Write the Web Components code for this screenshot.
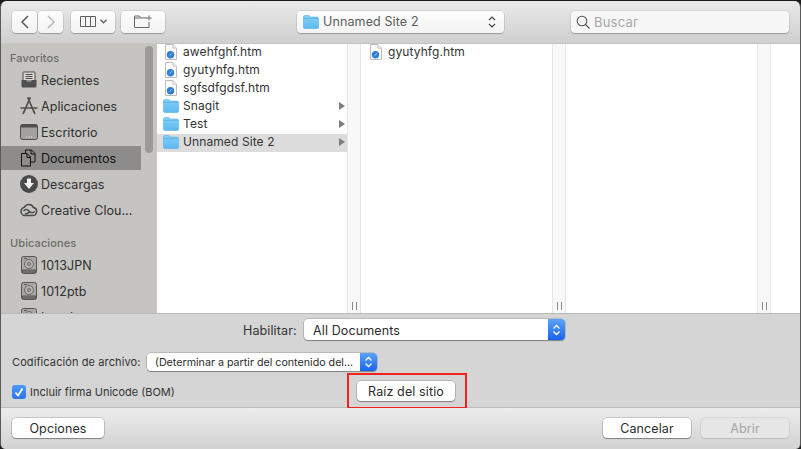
<!DOCTYPE html>
<html lang="es">
<head>
<meta charset="utf-8">
<title>Abrir</title>
<style>
  html, body { margin: 0; height: 449px; overflow: hidden; background: #1c1c1c; }
  body { font-family: Inter, "Liberation Sans", sans-serif; }
</style>
</head>
<body>
<open-dialog>
  <dialog-toolbar slot="toolbar"></dialog-toolbar>
  <place-sidebar slot="sidebar">
    <side-heading>Favoritos</side-heading>
    <side-item icon="recent">Recientes</side-item>
    <side-item icon="apps">Aplicaciones</side-item>
    <side-item icon="desktop">Escritorio</side-item>
    <side-item icon="docs" selected>Documentos</side-item>
    <side-item icon="down">Descargas</side-item>
    <side-item icon="cloud">Creative Clou...</side-item>
    <side-heading style="margin-top:13px">Ubicaciones</side-heading>
    <side-item icon="disk">1013JPN</side-item>
    <side-item icon="disk">1012ptb</side-item>
    <side-item icon="disk">Local</side-item>
  </place-sidebar>
  <file-browser slot="browser">
    <file-column style="width:204px">
      <file-row type="web">awehfghf.htm</file-row>
      <file-row type="web">gyutyhfg.htm</file-row>
      <file-row type="web">sgfsdfgdsf.htm</file-row>
      <file-row type="folder" arrow>Snagit</file-row>
      <file-row type="folder" arrow>Test</file-row>
      <file-row type="folder" arrow selected>Unnamed Site 2</file-row>
    </file-column>
    <file-column style="width:205px">
      <file-row type="web" indent>gyutyhfg.htm</file-row>
    </file-column>
    <file-column style="width:205px"></file-column>
    <file-column last></file-column>
  </file-browser>
  <open-options slot="options"></open-options>
  <dialog-footer slot="footer"></dialog-footer>
</open-dialog>

<script>
const FOLDER = `
  <svg width="16" height="14" viewBox="0 0 16 14">
    <defs><linearGradient id="fg" x1="0" y1="0" x2="0" y2="1"><stop offset="0" stop-color="#86d0f8"/><stop offset="1" stop-color="#5cb9f0"/></linearGradient></defs>
    <path d="M.5 2Q.5.5 2 .5h3.4q.8 0 1.3.7l.7.9h6.8q1.3 0 1.3 1.4v8.6q0 1.4-1.3 1.4H1.8Q.5 13.5.5 12.1z" fill="url(#fg)" stroke="#55addf" stroke-width=".6"/>
    <path d="M.6 3.4h14.8" stroke="#55addf" stroke-width=".7"/>
  </svg>`;

const WEB_FILE = `
  <svg width="12" height="16" viewBox="0 0 12 16">
    <path d="M.5.5h7.4l3.6 3.6v11.4H.5z" fill="#fcfcfc" stroke="#bdbdbd"/>
    <path d="M7.8.7v3.5h3.5" fill="#eee" stroke="#bdbdbd" stroke-width=".8"/>
    <circle cx="5.5" cy="10.7" r="3.7" fill="#2f7fd8"/>
    <path d="M3.4 12.8l2.6-3 1.6-1.2-1.2 1.7-3 2.5z" fill="#dfeeff"/>
  </svg>`;

const SIDE_ICONS = {
  recent: `<svg width="18" height="18" viewBox="0 0 18 18">
    <path d="M3 1.5Q3 1 3.5 1h11q.5 0 .5.5V10H3z" fill="#dbdad7" stroke="#4b4b4b"/>
    <path d="M5.5 3.5h7M5.5 5.5h7M5.5 7.5h7" stroke="#4b4b4b"/>
    <path d="M1.5 9H6l1 2h4l1-2h4.5v6q0 1.5-1.5 1.5H3Q1.500 16.500 1.500 15z" fill="#4f4f4f"/></svg>`,
  apps: `<svg width="18" height="18" viewBox="0 0 18 18" fill="none" stroke="#4d4d4d">
    <path d="M8 1l5.800 13.500M10 1L4.200 14.500" stroke-width="1.700" stroke-linecap="round"/>
    <path d="M1 11h16" stroke-width="1.500" stroke-linecap="round"/>
    <path d="M3.200 16.300l1-1.800M14.800 16.300l-1-1.800" stroke-width="1.600" stroke-linecap="round"/></svg>`,
  desktop: `<svg width="18" height="16" viewBox="0 0 18 16">
    <rect x=".5" y=".5" width="17" height="15" rx="1.800" fill="#a2a19f" stroke="#4f4f4f"/>
    <rect x="1" y="1" width="16" height="2.500" fill="#4f4f4f"/>
    <path d="M6 13h1M8.500 13h1M11 13h1" stroke="#e8e8e8" stroke-width="1.200"/></svg>`,
  docs: `<svg width="18" height="18" viewBox="0 0 18 18" fill="none" stroke="#111">
    <path d="M5.500 4V1h6l3.500 3.500V13h-4"/>
    <path d="M11 1v4h4"/>
    <path d="M1.500 4.500h5.500l3.500 3.500v9h-9z"/>
    <path d="M7 4.500V8.500h3.500"/></svg>`,
  down: `<svg width="18" height="18" viewBox="0 0 18 18">
    <circle cx="9" cy="9" r="9" fill="#4a4a4a"/>
    <path d="M7 3.500h4V8h3l-5 6-5-6h3z" fill="#f2f2f2"/></svg>`,
  cloud: `<svg width="18" height="14" viewBox="0 0 18 14" fill="none" stroke="#4a4a4a" stroke-width="1.500">
    <path d="M6 12.500h6.500a4 4 0 0 0 1-7.900A5 5 0 0 0 4.500 4.200 4.200 4.200 0 0 0 6 12.500z"/>
    <path d="M3.500 8c2-2.200 4-1.800 5.500 0s3.500 2.500 6 .5"/>
    <path d="M5 10.500c1.800 1 3.500-.5 4.500-1.700"/></svg>`,
  disk: `<svg width="16" height="18" viewBox="0 0 16 18">
    <rect x=".5" y=".5" width="15" height="17" rx="2" fill="#a8a7a5" stroke="#555"/>
    <path d="M3 2.500h3" stroke="#555"/>
    <circle cx="8" cy="8" r="4.500" fill="#b3b2b0" stroke="#6a6a6a"/>
    <circle cx="8" cy="8" r="1.500" fill="none" stroke="#666"/>
    <rect x="1" y="13.500" width="14" height="3.500" fill="#555"/>
    <path d="M3 14v3M5 14v3M7 14v3M9 14v3M11 14v3M13 14v3" stroke="#a8a7a5" stroke-width=".6"/></svg>`
};

// buttons share the same raised look, only the size changes
class PushButton extends HTMLElement {
  connectedCallback() {
    this.attachShadow({ mode: 'open' }).innerHTML = `
      <style>
        :host {
          display: inline-flex; align-items: center; justify-content: center;
          height: 20px; box-sizing: border-box; padding-top: 1px;
          background: #fff; border-radius: 4px; color: #2c2c2c;
          font-size: 12.5px; letter-spacing: .12px;
          box-shadow: 0 0 0 .5px rgba(0,0,0,.28), 0 1px 1px rgba(0,0,0,.3);
        }
        :host([disabled]) {
          background: #e6e6e6; color: #a5a5a5;
          box-shadow: 0 0 0 .5px rgba(0,0,0,.12), 0 1px 1px rgba(0,0,0,.08);
        }
      </style>
      <slot></slot>`;
  }
}

class ToolButton extends HTMLElement {
  connectedCallback() {
    this.attachShadow({ mode: 'open' }).innerHTML = `
      <style>
        :host {
          display: flex; align-items: center; justify-content: center;
          height: 22px; box-sizing: border-box; gap: 4px;
          background: linear-gradient(#fdfdfd, #f3f3f3); border-radius: 4px;
          box-shadow: 0 0 0 .5px rgba(0,0,0,.14), 0 1px 1px rgba(0,0,0,.22);
        }
      </style>
      <slot></slot>`;
  }
}

class DialogToolbar extends HTMLElement {
  connectedCallback() {
    this.attachShadow({ mode: 'open' }).innerHTML = `
      <style>
        :host {
          display: flex; align-items: center; box-sizing: border-box;
          height: 43px; padding: 0 11px 1px 11px;
          background: linear-gradient(#e9e9e9, #cfcfcf);
          border-bottom: 1px solid #c4c4c4;
        }
        .nav { display: flex; gap: 1px; margin-right: 8px; }
        .search {
          display: flex; align-items: center; gap: 4px; box-sizing: border-box;
          width: 218px; height: 22px; padding-left: 5px; margin-left: auto;
          background: #f7f7f7; border-radius: 4px;
          box-shadow: 0 0 0 .5px rgba(0,0,0,.12), 0 1px 1px rgba(0,0,0,.22);
          color: #a8a8a8; font-size: 13px; letter-spacing: .2px;
        }
        .path { font-size: 12.5px; color: #5c5c5c; letter-spacing: .12px; flex: 1; }
      </style>
      <div class="nav">
        <tool-button style="width:25px">
          <svg width="10" height="14" viewBox="0 0 10 14" fill="none" stroke="#5a5a5a" stroke-width="1.500"><path d="M8 1L2 7l6 6"/></svg>
        </tool-button>
        <tool-button style="width:25px">
          <svg width="10" height="14" viewBox="0 0 10 14" fill="none" stroke="#b8b8b8" stroke-width="1.500"><path d="M2 1l6 6-6 6"/></svg>
        </tool-button>
      </div>
      <tool-button style="width:44px;margin-right:6px">
        <svg width="16" height="11" viewBox="0 0 16 11" fill="none" stroke="#5f5f5f"><path d="M.5.500h15v10H.5zM5.500.500v10M10.500.500v10"/></svg>
        <svg width="7" height="5" viewBox="0 0 7 5" fill="none" stroke="#5f5f5f" stroke-width="1.300"><path d="M.500.800l3 3 3-3"/></svg>
      </tool-button>
      <tool-button style="width:44px;margin-right:132px">
        <svg width="18" height="13" viewBox="0 0 18 13" fill="none" stroke="#6a6a6a"><path d="M.500 12V1h5l1.500 2h6M.500 3h6M.500 12.500H15V7M15 .500v5M12.500 3h5"/></svg>
      </tool-button>
      <tool-button style="width:207px;justify-content:flex-start;padding:0 8px 0 6px;gap:4px">
        ${FOLDER}
        <span class="path">Unnamed Site 2</span>
        <svg width="8" height="14" viewBox="0 0 8 14" fill="none" stroke="#444" stroke-width="1.200"><path d="M1 5l3-3 3 3M1 9l3 3 3-3"/></svg>
      </tool-button>
      <div class="search">
        <svg width="14" height="14" viewBox="0 0 14 14" fill="none" stroke="#555" stroke-width="1.100"><circle cx="6" cy="6" r="4.800"/><path d="M9.500 9.500l4 4"/></svg>
        <span>Buscar</span>
      </div>`;
  }
}

class PlaceSidebar extends HTMLElement {
  connectedCallback() {
    this.attachShadow({ mode: 'open' }).innerHTML = `
      <style>
        :host {
          display: flex; flex-direction: column; position: relative;
          width: 156px; flex: none; overflow: hidden;
          background: #c5c4c1; padding-top: 6px; box-sizing: border-box;
        }
        .thumb {
          position: absolute; left: 144px; top: 2px;
          width: 8px; height: 107px; border-radius: 4px; background: #9b9a98;
        }
      </style>
      <slot></slot>
      <div class="thumb"></div>`;
  }
}

class SideHeading extends HTMLElement {
  connectedCallback() {
    this.attachShadow({ mode: 'open' }).innerHTML = `
      <style>
        :host {
          display: block; height: 16px; line-height: 16px; padding-left: 9px;
          font-size: 11px; font-weight: 500; color: #6c6b6a; letter-spacing: .1px;
        }
      </style>
      <slot></slot>`;
  }
}

class SideItem extends HTMLElement {
  connectedCallback() {
    const icon = SIDE_ICONS[this.getAttribute('icon')] || '';
    this.attachShadow({ mode: 'open' }).innerHTML = `
      <style>
        :host {
          display: flex; align-items: center; flex: none;
          width: 140px; height: 24px; margin: 2px 0 0 0;
          font-size: 12.5px; color: #2f2f2f; letter-spacing: .05px;
        }
        :host([selected]) { background: #8d8c8a; color: #111; }
        .ic { width: 18px; height: 18px; display: flex; align-items: center; justify-content: center; margin: 0 3px 0 19px; flex: none; }
      </style>
      <span class="ic">${icon}</span><slot></slot>`;
  }
}

class FileBrowser extends HTMLElement {
  connectedCallback() {
    this.attachShadow({ mode: 'open' }).innerHTML = `
      <style>
        :host { display: flex; flex: 1; min-width: 0; background: #fff; }
      </style>
      <slot></slot>`;
  }
}

class FileColumn extends HTMLElement {
  connectedCallback() {
    const handle = this.hasAttribute('last') ? '' : `
      <div class="handle">
        <svg width="5" height="8" viewBox="0 0 5 8" stroke="#8a8a8a"><path d="M.500 0v8M4.500 0v8"/></svg>
      </div>`;
    this.attachShadow({ mode: 'open' }).innerHTML = `
      <style>
        :host { display: flex; flex: none; }
        :host([last]) { flex: 1; }
        .list { flex: 1; min-width: 0; }
        .handle {
          width: 12px; flex: none; display: flex; align-items: flex-end; justify-content: center;
          padding-bottom: 3px; box-sizing: content-box;
          background: #f8f8f8; border: solid #e6e6e6; border-width: 0 1px;
        }
      </style>
      <div class="list"><slot></slot></div>${handle}`;
  }
}

class FileRow extends HTMLElement {
  connectedCallback() {
    const isFolder = this.getAttribute('type') === 'folder';
    const arrow = this.hasAttribute('arrow')
      ? '<svg class="arrow" width="6" height="8" viewBox="0 0 6 8"><path d="M0 0l6 4-6 4z" fill="#7d7d7d"/></svg>'
      : '';
    this.attachShadow({ mode: 'open' }).innerHTML = `
      <style>
        :host {
          display: flex; align-items: center; height: 18px; box-sizing: border-box;
          padding-left: 6px; padding-bottom: 2px; font-size: 12px; color: #333; letter-spacing: .1px;
        }
        :host([indent]) { padding-left: 7px; }
        :host([selected]) { background: #dcdcdc; }
        .ic { width: 16px; display: flex; justify-content: center; margin-right: 4px; flex: none; }
        .name { padding-bottom: 2px; }
        .arrow { margin-left: auto; margin-right: 2px; }
      </style>
      <span class="ic">${isFolder ? FOLDER : WEB_FILE}</span><span class="name"><slot></slot></span>${arrow}`;
  }
}

class PopupSelect extends HTMLElement {
  connectedCallback() {
    this.attachShadow({ mode: 'open' }).innerHTML = `
      <style>
        :host {
          display: flex; align-items: center; box-sizing: border-box; overflow: hidden;
          background: #fff; border-radius: 4px;
          box-shadow: 0 0 0 .5px rgba(0,0,0,.25), 0 1px 1px rgba(0,0,0,.3);
          color: #2c2c2c;
        }
        .text { flex: 1; min-width: 0; white-space: nowrap; padding-top: 1px; }
        .cap {
          width: 17px; height: 100%; flex: none; display: flex; align-items: center; justify-content: center;
          background: linear-gradient(#5ba4f8, #1a62ee);
        }
      </style>
      <span class="text"><slot></slot></span>
      <span class="cap">
        <svg width="9" height="14" viewBox="0 0 9 14" fill="none" stroke="#fff" stroke-width="1.300"><path d="M1.500 5.500l3-3 3 3M1.500 8.500l3 3 3-3"/></svg>
      </span>`;
  }
}

class OpenOptions extends HTMLElement {
  connectedCallback() {
    this.attachShadow({ mode: 'open' }).innerHTML = `
      <style>
        :host {
          display: flex; flex-direction: column; box-sizing: border-box;
          height: 94px; padding-top: 5px;
          background: #d5d5d5; border-bottom: 1px solid #bcbcbc;
          color: #333;
        }
        .row { display: flex; align-items: center; }
        .enable { height: 21px; padding-left: 242px; font-size: 12.5px; letter-spacing: .12px; }
        .enable span { width: 61px; flex: none; padding-top: 1px; }
        .enc { height: 18px; margin-top: 13px; padding-left: 11px; font-size: 11px; letter-spacing: .1px; }
        .enc span { width: 135px; flex: none; }
        .last { height: 36px; margin-top: 2px; padding-left: 11px; font-size: 11px; }
        .check {
          width: 14px; height: 14px; border-radius: 3px; flex: none; margin: 1px 4px 0 0;
          background: linear-gradient(#4d9bfa, #2a73f0);
          display: flex; align-items: center; justify-content: center;
        }
        .lbl { width: 317px; flex: none; margin-top: 1px; }
        .mark {
          display: flex; align-items: center; box-sizing: border-box;
          width: 120px; height: 36px; padding-left: 8px; border: 2px solid #f2231d;
        }
      </style>
      <div class="row enable">
        <span>Habilitar:</span>
        <popup-select style="width:261px;height:21px;padding-left:9px">All Documents</popup-select>
      </div>
      <div class="row enc">
        <span>Codificación de archivo:</span>
        <popup-select style="width:230px;height:18px;padding-left:8px;font-size:10.7px;letter-spacing:0">(Determinar a partir del contenido del...</popup-select>
      </div>
      <div class="row last">
        <span class="check">
          <svg width="10" height="10" viewBox="0 0 10 10" fill="none" stroke="#fff" stroke-width="1.700"><path d="M1.500 5.500l2.500 3 4.500-7"/></svg>
        </span>
        <span class="lbl">Incluir firma Unicode (BOM)</span>
        <div class="mark"><push-button style="width:98px">Raíz del sitio</push-button></div>
      </div>`;
  }
}

class DialogFooter extends HTMLElement {
  connectedCallback() {
    this.attachShadow({ mode: 'open' }).innerHTML = `
      <style>
        :host {
          display: flex; align-items: center; box-sizing: border-box;
          height: 41px; padding: 0 11px 1px 11px;
          background: linear-gradient(#ececec, #d2d2d2);
        }
      </style>
      <push-button style="width:92px">Opciones</push-button>
      <push-button style="width:88px;margin-left:auto">Cancelar</push-button>
      <push-button disabled style="width:88px;margin-left:10px">Abrir</push-button>`;
  }
}

class OpenDialog extends HTMLElement {
  connectedCallback() {
    this.attachShadow({ mode: 'open' }).innerHTML = `
      <style>
        :host {
          display: flex; flex-direction: column; box-sizing: border-box;
          width: 801px; height: 448px; margin-top: 1px; overflow: hidden;
          border-radius: 6px 6px 5px 5px; border: solid #5a5a5a; border-width: 0 1px;
        }
        .main { display: flex; height: 270px; flex: none; border-bottom: 1px solid #b8b8b8; box-sizing: border-box; }
      </style>
      <slot name="toolbar"></slot>
      <div class="main"><slot name="sidebar"></slot><slot name="browser"></slot></div>
      <slot name="options"></slot>
      <slot name="footer"></slot>`;
  }
}

customElements.define('push-button', PushButton);
customElements.define('tool-button', ToolButton);
customElements.define('dialog-toolbar', DialogToolbar);
customElements.define('place-sidebar', PlaceSidebar);
customElements.define('side-heading', SideHeading);
customElements.define('side-item', SideItem);
customElements.define('file-browser', FileBrowser);
customElements.define('file-column', FileColumn);
customElements.define('file-row', FileRow);
customElements.define('popup-select', PopupSelect);
customElements.define('open-options', OpenOptions);
customElements.define('dialog-footer', DialogFooter);
customElements.define('open-dialog', OpenDialog);
</script>
</body>
</html>
